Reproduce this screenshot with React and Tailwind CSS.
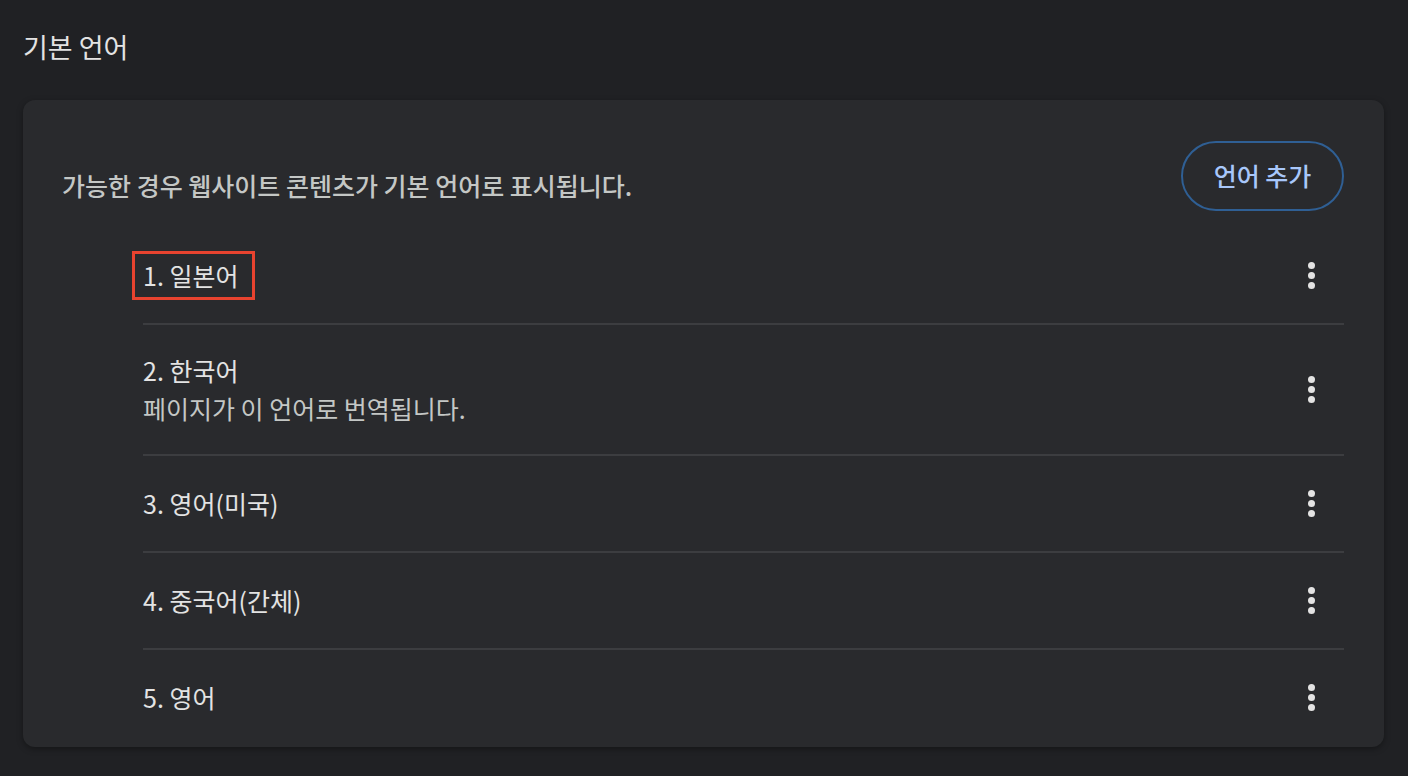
const languages = [
  { id: 1, name: '1. 일본어', highlight: true },
  { id: 2, name: '2. 한국어', note: '페이지가 이 언어로 번역됩니다.' },
  { id: 3, name: '3. 영어(미국)' },
  { id: 4, name: '4. 중국어(간체)' },
  { id: 5, name: '5. 영어' },
];

function Kebab() {
  return (
    <button className="flex h-[40px] w-[40px] flex-col items-center justify-center gap-[3px] rounded-full">
      <span className="h-[7px] w-[7px] rounded-full bg-[#e3e3e3]" />
      <span className="h-[7px] w-[7px] rounded-full bg-[#e3e3e3]" />
      <span className="h-[7px] w-[7px] rounded-full bg-[#e3e3e3]" />
    </button>
  );
}

export default function App() {
  return (
    <div
      className="min-h-screen bg-[#202124] px-[23px] pt-[30px] text-[#e3e3e3]"
      style={{ fontFamily: '"Noto Sans CJK KR", "Noto Sans", sans-serif' }}
    >
      <h1 className="mb-[37px] text-[27px] leading-[33px] font-normal">기본 언어</h1>

      <div className="mr-px rounded-[12px] bg-[#292a2d] pt-[41px] pr-[40px] pb-[2px] pl-[39px] shadow-[0_2px_6px_rgba(0,0,0,0.35)]">
        <div className="flex items-start justify-between">
          <p className="mt-[28px] text-[25px] leading-[32px] font-medium text-[#c4c7c5]">
            가능한 경우 웹사이트 콘텐츠가 기본 언어로 표시됩니다.
          </p>
          <button className="h-[70px] w-[163px] rounded-full border-2 border-[#2f5f94] text-[25px] font-medium text-[#a8c7fa]">
            언어 추가
          </button>
        </div>

        <div className="mt-[17px] pl-[81px]">
          {languages.map((lang, i) => (
            <div key={lang.id}>
              {i > 0 && <div className="h-[2px] bg-[#3c3d40]" />}
              <div
                className={`flex items-center justify-between ${lang.note ? 'h-[129px]' : 'h-[95px]'}`}
              >
                <div>
                  {lang.highlight ? (
                    <span className="-ml-[11px] inline-block border-[3px] border-[#e8432f] py-[5px] pr-[14px] pl-[8px] text-[25px] leading-[33px]">
                      {lang.name}
                    </span>
                  ) : (
                    <div className="text-[25px] leading-[33px]">{lang.name}</div>
                  )}
                  {lang.note && (
                    <div className="mt-[5px] text-[25px] leading-[33px] text-[#c4c7c5]">{lang.note}</div>
                  )}
                </div>
                <div className="mr-[13px]">
                  <Kebab />
                </div>
              </div>
            </div>
          ))}
        </div>
      </div>
    </div>
  );
}
